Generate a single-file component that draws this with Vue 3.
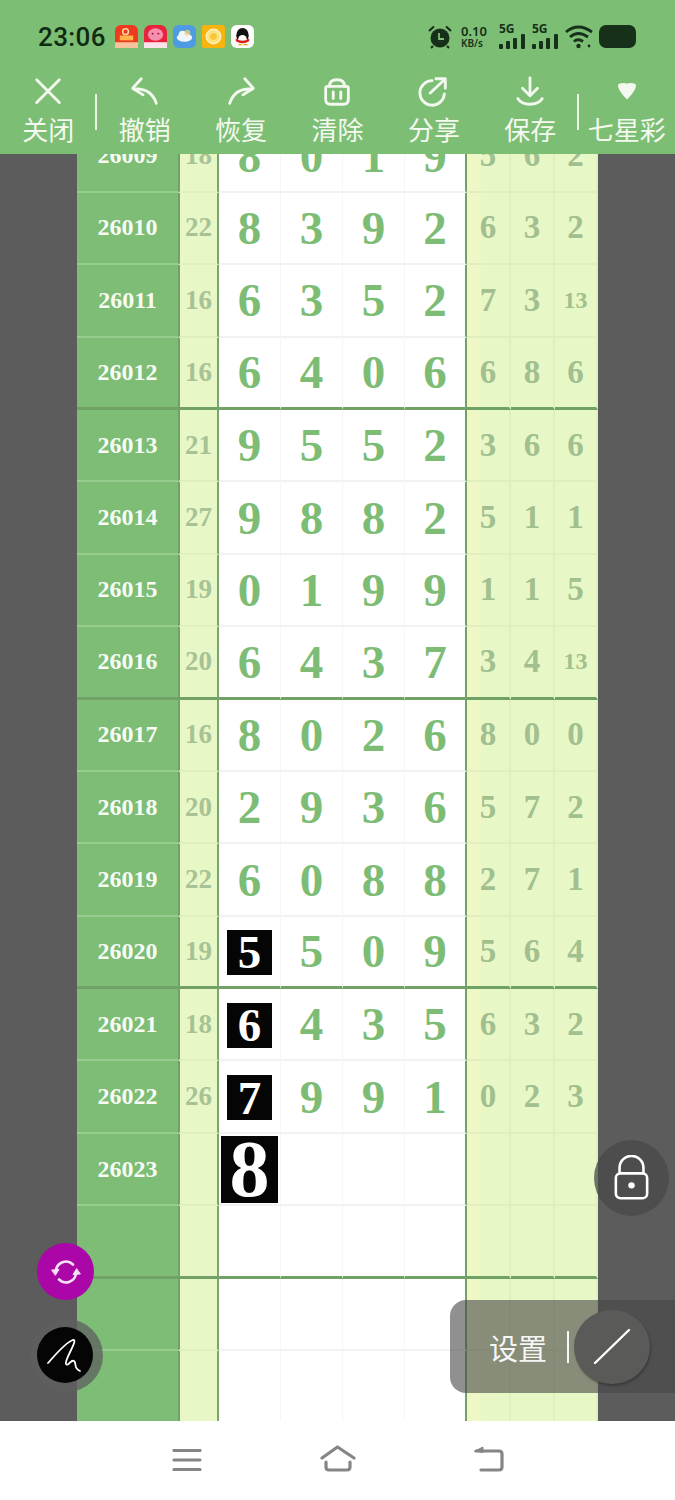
<template>
  <div class="page">
    <header class="top">
      <div class="status">
        <span class="clock">23:06</span>
        <div class="apps">
          <svg viewBox="0 0 24 24" class="app"><rect width="24" height="24" rx="6" fill="#ee3b1f" /><rect y="18" width="24" height="6" fill="#f7c39a" /><circle cx="11" cy="7" r="3" fill="none" stroke="#ffd9a0" stroke-width="1.6" /><rect x="5" y="11" width="14" height="5" fill="#ffb54a" /></svg>
          <svg viewBox="0 0 24 24" class="app"><rect width="24" height="24" rx="7" fill="#e8243c" /><rect y="18" width="24" height="6" fill="#fbe3ea" /><ellipse cx="12" cy="10" rx="8" ry="6.5" fill="#f78fb0" /><circle cx="9" cy="9" r="1" fill="#a01030" /><circle cx="15" cy="9" r="1" fill="#a01030" /></svg>
          <svg viewBox="0 0 24 24" class="app"><rect width="24" height="24" rx="6" fill="#4e9be4" /><ellipse cx="12" cy="13" rx="8" ry="4.5" fill="#eef6fc" /><circle cx="10" cy="10" r="4" fill="#eef6fc" /><circle cx="15" cy="8" r="3" fill="#ffd36a" opacity=".7" /></svg>
          <svg viewBox="0 0 24 24" class="app"><rect width="24" height="24" rx="3" fill="#f8b40e" /><circle cx="12" cy="12" r="7.5" fill="#fbe27a" stroke="#fff3c0" stroke-width="1.5" /><circle cx="12" cy="12" r="3.5" fill="#f8c53a" /></svg>
          <svg viewBox="0 0 24 24" class="app"><rect width="24" height="24" rx="6" fill="#fff" /><ellipse cx="12" cy="11" rx="6.5" ry="8" fill="#111" /><ellipse cx="12" cy="15" rx="4.5" ry="4.5" fill="#fff" /><path d="M5 14 Q12 19 19 14 L19 17 Q12 21 5 17 Z" fill="#d8201c" /><path d="M7 21 Q10 18 12 21 Q15 18 18 21 Z" fill="#f2a20c" /></svg>
        </div>
        <div class="indicators">
          <svg viewBox="0 0 24 24" class="alarm"><circle cx="12" cy="13" r="9.500" fill="#17301a" /><path d="M1 6 L6 1.500 M23 6 L18 1.500 M5 21 L3 23 M19 21 L21 23" stroke="#17301a" stroke-width="2.200" /><path d="M11 8 V14 H16" fill="none" stroke="#7dbe75" stroke-width="1.800" /></svg>
          <div class="speed"><span>0.10</span><span class="unit">KB/s</span></div>
          <div v-for="n in 2" :key="n" class="signal">
            <span class="tag">5G</span>
            <svg viewBox="0 0 27 15" class="bars"><rect y="10" width="4" height="5" rx="1" /><rect x="7" y="7" width="4" height="8" rx="1" /><rect x="14" y="4" width="4" height="11" rx="1" /><rect x="22" y="0" width="4" height="15" rx="1" /></svg>
          </div>
          <svg viewBox="0 0 28 24" class="wifi"><path d="M1 7 Q13 -3 27 7 M5 12 Q13 5 23 12 M9 16.500 Q13 13 18 16.500" fill="none" stroke="#17301a" stroke-width="2.800" /><circle cx="13.500" cy="21" r="2.200" fill="#17301a" /><circle cx="24" cy="21" r="1.400" fill="#17301a" /></svg>
          <div class="battery"></div>
        </div>
      </div>
      <nav class="tools">
        <div v-for="t in tools" :key="t.label" class="tool" :class="t.cls">
          <svg viewBox="0 0 36 36" class="tool-icon" fill="none" stroke="#f4f9f0" stroke-width="3" stroke-linecap="round" stroke-linejoin="round">
            <path v-for="d in t.paths" :key="d" :d="d" :fill="t.fill ? '#f4f9f0' : 'none'" />
          </svg>
          <span class="tool-label">{{ t.label }}</span>
        </div>
      </nav>
    </header>

    <main class="board">
      <div class="table">
        <div v-for="r in rows" :key="r.key" class="row" :class="{ end: r.end }">
          <div class="cell id">{{ r.id }}</div>
          <div class="cell sum">{{ r.sum }}</div>
          <div v-for="(d, i) in r.digits" :key="i" class="cell num" :class="{ edge: i === 3 }">
            <span v-if="d !== '' && i === r.mark" class="mark" :class="{ big: r.big }">{{ d }}</span>
            <template v-else>{{ d }}</template>
          </div>
          <div v-for="(d, i) in r.tail" :key="'t' + i" class="cell tail" :class="{ small: d.length > 1, warm: i === 0 }">{{ d }}</div>
        </div>
      </div>
    </main>

    <footer class="softkeys">
      <svg viewBox="0 0 30 22" class="key menu"><path d="M2 1.500 H28 M2 11 H28 M2 20.500 H28" /></svg>
      <svg viewBox="0 0 36 28" class="key home"><path d="M2 13 L17.500 2 L34 13 M6 17 V22 Q6 25 9 25 H27 Q30 25 30 22 V17" /></svg>
      <svg viewBox="0 0 32 28" class="key back"><path d="M4 6 H27 Q30 6 30 9 V22 Q30 25 27 25 H9" /><path d="M3 6 L11 2 V7 Z" class="solid" /></svg>
    </footer>

    <div class="fab sync">
      <svg viewBox="0 0 32 32" width="32" height="32" fill="none" stroke="#f6e3f6" stroke-width="2.600" stroke-linecap="round"><path d="M6 15 A10 10 0 0 1 23 8.500" /><path d="M26 17 A10 10 0 0 1 9 23.500" /><path d="M2 14 L9 13.500 L5.500 19 Z M30 18 L23 18.500 L26.500 13 Z" fill="#f6e3f6" stroke-width="1" /></svg>
    </div>
    <div class="pen-halo">
      <div class="fab pen">
        <svg viewBox="0 0 38 38" width="38" height="38" fill="none" stroke="#fff" stroke-width="1.800" stroke-linecap="round" stroke-linejoin="round"><path d="M2 27 C10 18 20 6 27 4 C33 3 18 24 20 28 C22 31 25 23 28 25 C31 27 27 32 34 35" /></svg>
      </div>
    </div>
    <div class="lock-btn">
      <svg viewBox="0 0 38 50" width="35" height="46" fill="none" stroke="#fff" stroke-width="2.800"><path d="M6 20 V14 A13 13 0 0 1 32 14 V20" /><rect x="2" y="20" width="34" height="27" rx="5" /><circle cx="19" cy="33" r="3.500" fill="#fff" stroke="none" /></svg>
    </div>
    <div class="settings">
      <span class="settings-label">设置</span>
      <span class="settings-sep"></span>
    </div>
    <div class="slash-btn">
      <svg viewBox="0 0 38 38" width="38" height="38" stroke="#fff" stroke-width="2.400" stroke-linecap="round"><path d="M2 35 L36 2" /></svg>
    </div>
  </div>
</template>

<script setup>
const tools = [
  { label: "关闭", cls: "sep-right", paths: ["M6 5 L30 29", "M30 5 L6 29"] },
  { label: "撤销", paths: ["M30 30 C26 18 18 14 6 15", "M14 4 L5 14 L16 21"] },
  { label: "恢复", paths: ["M6 30 C10 18 18 14 30 15", "M22 4 L31 14 L20 21"] },
  { label: "清除", paths: ["M8 12 H28 Q30 12 30 14 V26 Q30 31 25 31 H11 Q6 31 6 26 V14 Q6 12 8 12 Z", "M10 12 Q10 5 18 5 Q26 5 26 12", "M14 18 V25", "M22 18 V25"] },
  { label: "分享", paths: ["M16 6 A13 13 0 1 0 29 20", "M14 19 L29 5", "M20 4 H30 V14"] },
  { label: "保存", paths: ["M18 3 V21", "M10 14 L18 22 L26 14", "M5 25 C10 33 26 33 31 25"] },
  { label: "七星彩", cls: "sep-left", fill: true, paths: ["M10 11 Q14 9 18 11 Q22 9 26 11 Q27 14 18 24 Q9 14 10 11 Z"] },
];

const data = [
  ["26009", "18", "8019", "562"],
  ["26010", "22", "8392", "632"],
  ["26011", "16", "6352", "7,3,13"],
  ["26012", "16", "6406", "686"],
  ["26013", "21", "9552", "366"],
  ["26014", "27", "9882", "511"],
  ["26015", "19", "0199", "115"],
  ["26016", "20", "6437", "3,4,13"],
  ["26017", "16", "8026", "800"],
  ["26018", "20", "2936", "572"],
  ["26019", "22", "6088", "271"],
  ["26020", "19", "5509", "564"],
  ["26021", "18", "6435", "632"],
  ["26022", "26", "7991", "023"],
  ["26023", "", "8", ""],
  ["", "", "", ""],
  ["", "", "", ""],
  ["", "", "", ""],
];

const rows = data.map(([id, sum, digits, tail], i) => {
  const parts = tail.includes(",") ? tail.split(",") : tail.split("");
  return {
    key: i,
    id,
    sum,
    digits: Array.from({ length: 4 }, (_, k) => digits[k] || ""),
    tail: Array.from({ length: 3 }, (_, k) => parts[k] || ""),
    end: i % 4 === 3,
    mark: id >= "26020" && id !== "" ? 0 : -1,
    big: id === "26023",
  };
});
</script>

<style>
html,
body {
  margin: 0;
  background: #5c5c5c;
}
</style>

<style scoped>
.page {
  position: relative;
  width: 675px;
  height: 1500px;
  display: flex;
  flex-direction: column;
  overflow: hidden;
  background: #5c5c5c;
  font-family: "Liberation Serif", "Noto Sans CJK SC", serif;
}

/* header */
.top {
  height: 154px;
  flex: none;
  background: #7dbe75;
}
.status {
  height: 73px;
  padding: 0 39px 0 38px;
  display: flex;
  align-items: center;
  color: #0f2b12;
  box-sizing: border-box;
}
.clock {
  width: 77px;
  font: 500 26px "Roboto", sans-serif;
  letter-spacing: 0.4px;
}
.apps {
  display: flex;
  gap: 6px;
}
.app {
  width: 23px;
  height: 23px;
}
.indicators {
  margin-left: auto;
  display: flex;
  align-items: center;
  color: #17301a;
}
.alarm {
  width: 24px;
  height: 24px;
  margin-right: 9px;
}
.speed {
  display: flex;
  flex-direction: column;
  width: 38px;
  font: 600 13px/13px "Noto Sans", sans-serif;
}
.speed .unit {
  font-size: 10px;
  line-height: 11px;
}
.signal {
  position: relative;
  width: 27px;
  height: 24px;
  margin-right: 6px;
}
.tag {
  position: absolute;
  left: 0;
  top: -2px;
  font: 700 12px/12px "Noto Sans", sans-serif;
}
.bars {
  position: absolute;
  left: 0;
  bottom: 0;
  width: 27px;
  height: 15px;
  fill: #17301a;
}
.wifi {
  width: 28px;
  height: 24px;
  margin-right: 6px;
}
.battery {
  width: 37px;
  height: 23px;
  border-radius: 7px;
  background: #17301a;
}
.tools {
  display: grid;
  grid-template-columns: repeat(7, 1fr);
}
.tool {
  position: relative;
  display: flex;
  flex-direction: column;
  align-items: center;
  color: #f4f9f0;
}
.tool-icon {
  width: 34px;
  height: 34px;
  margin-top: 2px;
}
.tool-label {
  font: 26px/32px "Noto Sans CJK SC", sans-serif;
  white-space: nowrap;
  margin-top: 4px;
}
.sep-right::after,
.sep-left::before {
  content: "";
  position: absolute;
  top: 21px;
  width: 2px;
  height: 36px;
  background: #eef6e8;
}
.sep-right::after {
  right: -1px;
}
.sep-left::before {
  left: -2px;
}

/* board */
.board {
  flex: 1;
  min-height: 0;
  overflow: hidden;
  display: flex;
  justify-content: center;
}
.table {
  width: 521px;
  margin-top: -33.6px;
}
.row {
  height: 72.4px;
  display: grid;
  grid-template-columns: 101px 41px 62px 62px 62px 62px 44px 44px 43px;
}
.cell {
  display: flex;
  align-items: center;
  justify-content: center;
  box-sizing: border-box;
  font-weight: 700;
  border-bottom: 2px solid transparent;
}
.id {
  background: #7dbd75;
  color: #f7fbf3;
  font-size: 24px;
  border-bottom-color: #98cd90;
}
.sum {
  background: #e8f7c6;
  color: #a7c295;
  font-size: 27px;
  border-left: 2px solid #6fa264;
  border-right: 2px solid #7ba56e;
  border-bottom-color: #e0efbf;
}
.num {
  background: #fff;
  color: #7dbc75;
  font-size: 47px;
  border-right: 1px solid #f6f6f6;
  border-bottom-color: #f2f2f2;
}
.num.edge {
  border-right: 2px solid #6fa264;
}
.tail {
  background: #e8f7c6;
  color: #a1bf8f;
  font-size: 33px;
  border-right: 2px solid #dfefbf;
  border-bottom-color: #dfefbf;
}
.tail.warm {
  background: linear-gradient(90deg, #f0f7c6 0, #f0f7c6 14px, #e8f7c6 14px);
}
.tail.small {
  font-size: 24px;
}
.row.end .cell {
  border-bottom: 3px solid #6fa264;
}
.mark {
  width: 45px;
  height: 45px;
  margin-top: 2px;
  display: flex;
  align-items: center;
  justify-content: center;
  background: #050505;
  color: #fff;
  font-size: 47px;
}
.mark.big {
  width: 57px;
  height: 67px;
  margin-top: 0;
  font-size: 80px;
}

/* system nav */
.softkeys {
  height: 79px;
  flex: none;
  background: #fff;
  position: relative;
}
.key {
  position: absolute;
  fill: none;
  stroke: #858585;
  stroke-width: 3.2;
  stroke-linecap: round;
  stroke-linejoin: round;
}
.menu {
  left: 172px;
  top: 28px;
  width: 30px;
  height: 22px;
}
.home {
  left: 320px;
  top: 24px;
  width: 36px;
  height: 28px;
}
.back {
  left: 472px;
  top: 24px;
  width: 32px;
  height: 28px;
}
.back .solid {
  fill: #858585;
  stroke-width: 1;
}

/* floating controls */
.fab {
  position: absolute;
  border-radius: 50%;
  display: flex;
  align-items: center;
  justify-content: center;
}
.sync {
  left: 37px;
  top: 1243px;
  width: 57px;
  height: 57px;
  background: #aa06a8;
}
.pen-halo {
  position: absolute;
  left: 30px;
  top: 1319px;
  width: 73px;
  height: 73px;
  border-radius: 50%;
  background: rgba(95, 95, 95, 0.75);
}
.pen {
  left: 7px;
  top: 8px;
  width: 56px;
  height: 56px;
  background: #050505;
}
.lock-btn {
  position: absolute;
  left: 594px;
  top: 1140px;
  width: 75px;
  height: 76px;
  border-radius: 50%;
  background: rgba(72, 72, 72, 0.75);
  display: flex;
  align-items: center;
  justify-content: center;
}
.settings {
  position: absolute;
  left: 450px;
  top: 1300px;
  width: 225px;
  height: 93px;
  box-sizing: border-box;
  padding-left: 39px;
  border-radius: 16px 0 0 16px;
  background: rgba(70, 70, 70, 0.6);
  display: flex;
  align-items: center;
  color: #f6f6f6;
}
.settings-label {
  font: 29px "Noto Sans CJK SC", sans-serif;
}
.settings-sep {
  width: 2px;
  height: 32px;
  margin-left: 20px;
  background: #f6f6f6;
}
.slash-btn {
  position: absolute;
  left: 574px;
  top: 1310px;
  width: 76px;
  height: 74px;
  border-radius: 50%;
  background: #5a5a58;
  box-shadow: 1px 2px 2px rgba(40, 40, 40, 0.5);
  display: flex;
  align-items: center;
  justify-content: center;
}
</style>
